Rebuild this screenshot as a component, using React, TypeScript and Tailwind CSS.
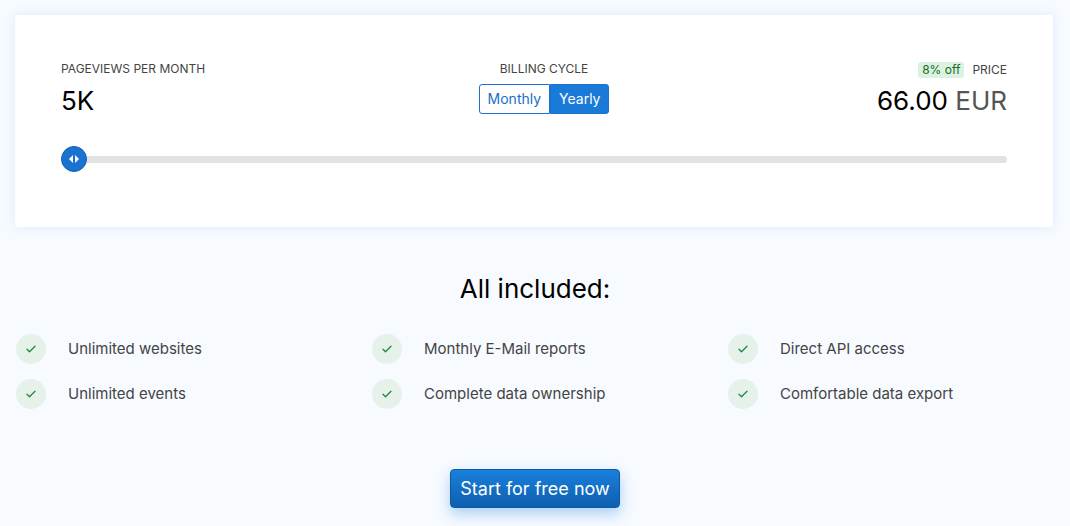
import React from "react";

const features = [
  "Unlimited websites",
  "Monthly E-Mail reports",
  "Direct API access",
  "Unlimited events",
  "Complete data ownership",
  "Comfortable data export",
];

function Check() {
  return (
    <div className="w-[30px] h-[30px] rounded-full bg-[#e6f1e9] flex items-center justify-center shrink-0">
      <svg width="12" height="12" viewBox="0 0 24 24" fill="none" stroke="#1d8a3a" strokeWidth="2.5" strokeLinecap="round" strokeLinejoin="round">
        <path d="M4 12.5l5 5L20 6.5" />
      </svg>
    </div>
  );
}

export default function App() {
  return (
    <div className="w-[1070px] h-[526px] bg-[#f7faff] overflow-hidden" style={{ fontFamily: "Inter, 'Noto Sans', sans-serif" }}>
      <div className="pt-[15px] px-[15px] pr-[17px]">
        <div className="bg-white rounded-[3px] shadow-[0_0_12px_rgba(120,160,220,0.18)] h-[212px] px-[46px] pt-[47px]">
          <div className="flex justify-between items-start">
            <div>
              <div className="text-[12px] text-[#444] leading-[14px] h-[16px]">PAGEVIEWS PER MONTH</div>
              <div className="text-[26px] text-black leading-[32px] mt-[7px]">5K</div>
            </div>
            <div className="flex flex-col items-center ml-[6px]">
              <div className="text-[12px] text-[#444] leading-[14px] h-[16px]">BILLING CYCLE</div>
              <div className="flex mt-[6px] text-[14px] leading-[28px]">
                <div className="px-[8px] border border-[#1a73d1] rounded-l-[3px] text-[#1a6fc2] bg-white">Monthly</div>
                <div className="px-[8px] border border-[#1a73d1] rounded-r-[3px] text-white bg-[#1a7ad8]">Yearly</div>
              </div>
            </div>
            <div className="flex flex-col items-end">
              <div className="flex items-center gap-[8px] h-[16px]">
                <span className="text-[12px] text-[#166b2a] bg-[#dcf2e0] rounded-[3px] px-[4px] leading-[16px]">8% off</span>
                <span className="text-[12px] text-[#444] leading-[14px]">PRICE</span>
              </div>
              <div className="text-[26px] leading-[32px] mt-[7px]">
                <span className="text-black">66.00</span> <span className="text-[#555]">EUR</span>
              </div>
            </div>
          </div>
          <div className="relative mt-[29px] h-[26px] flex items-center">
            <div className="w-full h-[7px] rounded-full bg-[#e2e2e2]" />
            <div className="absolute left-0 top-0 w-[26px] h-[26px] rounded-full bg-[#1a73d1] border border-[#1560b0] flex items-center justify-center">
              <svg width="10" height="8" viewBox="0 0 10 8"><path d="M0 4L4 0V8Z M10 4L6 0V8Z" fill="white" /></svg>
            </div>
          </div>
        </div>
      </div>
      <div className="text-center text-[26px] text-black mt-[45px] leading-[34px]">All included:</div>
      <div className="grid grid-cols-[356px_356px_356px] pl-[16px] gap-y-[15px] mt-[28px]">
        {features.map((f) => (
          <div key={f} className="flex items-center gap-[22px]">
            <Check />
            <span className="text-[15px] text-[#444]">{f}</span>
          </div>
        ))}
      </div>
      <div className="flex justify-center mt-[60px]">
        <button className="w-[170px] h-[39px] rounded-[4px] text-white text-[18px] bg-gradient-to-b from-[#1a80dc] to-[#0e5fae] border border-[#0c5aa6] shadow-[0_6px_14px_rgba(26,128,220,0.35)]">
          Start for free now
        </button>
      </div>
    </div>
  );
}
